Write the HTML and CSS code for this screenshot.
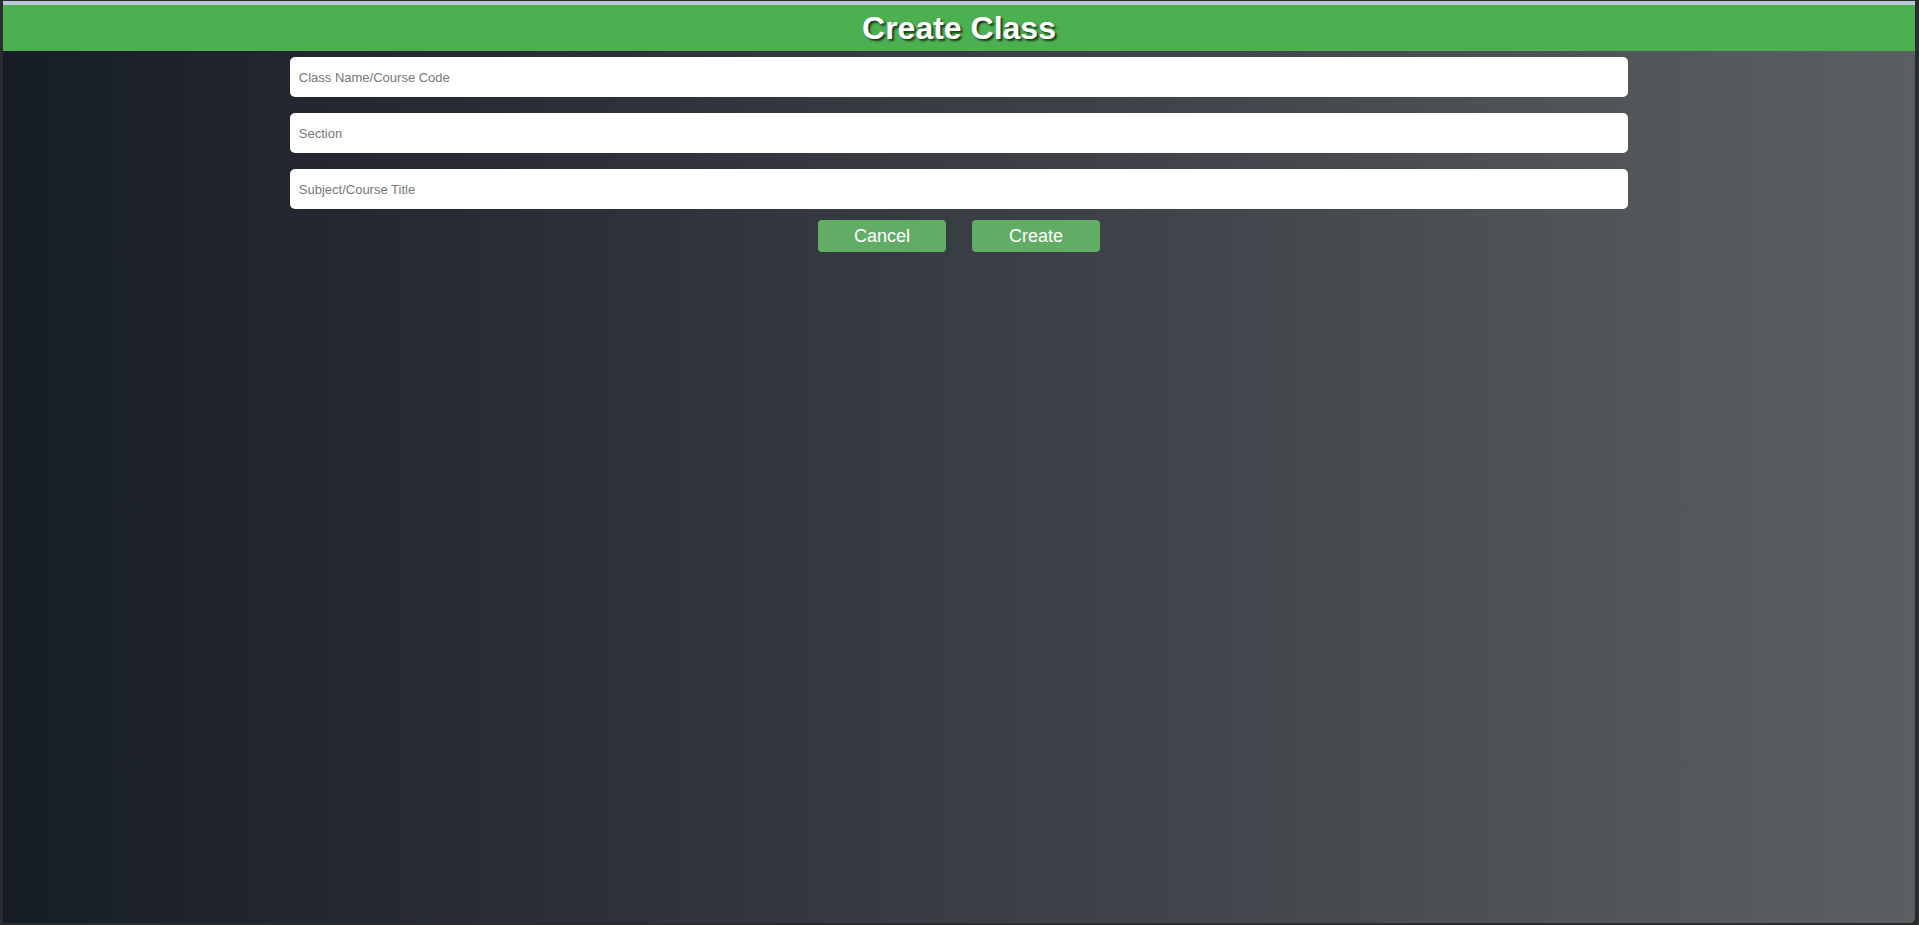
FILE: index.html
```html
<!DOCTYPE html>
<html>
<head>
<meta charset="utf-8">
<title>Create Class</title>
<link rel="stylesheet" href="styles.css">
</head>
<body>
<div class="window">
  <header class="header"><h1 class="title">Create Class</h1></header>
  <form class="form">
    <input class="field" type="text" placeholder="Class Name/Course Code">
    <input class="field" type="text" placeholder="Section">
    <input class="field" type="text" placeholder="Subject/Course Title">
    <div class="actions">
      <button type="button" class="btn">Cancel</button>
      <button type="button" class="btn">Create</button>
    </div>
  </form>
</div>
</body>
</html>
```
FILE: styles.css
```css
html, body {
  margin: 0;
  height: 100%;
}
body {
  background: #2c2c2e;
  font-family: "Liberation Sans", Arial, sans-serif;
  padding: 1px 4px 2px 3px;
  box-sizing: border-box;
}
.window {
  height: 100%;
  box-sizing: border-box;
  border-top: 4px solid #b8c9d7;
  border-bottom-right-radius: 5px;
  background: linear-gradient(to right, #171d26 0%, #393d44 50%, #5c5f62 100%);
  display: flex;
  flex-direction: column;
  overflow: hidden;
}
.header {
  height: 46px;
  background: #4caf50;
  display: flex;
  align-items: center;
  justify-content: center;
}
.title {
  margin: 0;
  font-size: 32px;
  font-weight: bold;
  color: #fff;
  line-height: 1;
  text-shadow: 2px 2px 2px #1e3a1f;
}
.form {
  display: flex;
  flex-direction: column;
  align-items: center;
  padding-top: 6px;
  gap: 16px;
}
.field {
  width: 70%;
  height: 40px;
  box-sizing: border-box;
  border: none;
  border-radius: 5px;
  background: #fff;
  padding: 0 9px;
  font-family: "Liberation Sans", Arial, sans-serif;
  font-size: 13px;
  outline: none;
}
.field::placeholder {
  color: #777;
}
.actions {
  display: flex;
  gap: 26px;
  margin-top: -5px;
}
.btn {
  width: 128px;
  height: 32px;
  border: none;
  border-radius: 4px;
  background: #62ad66;
  color: #fff;
  font-family: "Liberation Sans", Arial, sans-serif;
  font-size: 18px;
  padding: 0;
}
```
